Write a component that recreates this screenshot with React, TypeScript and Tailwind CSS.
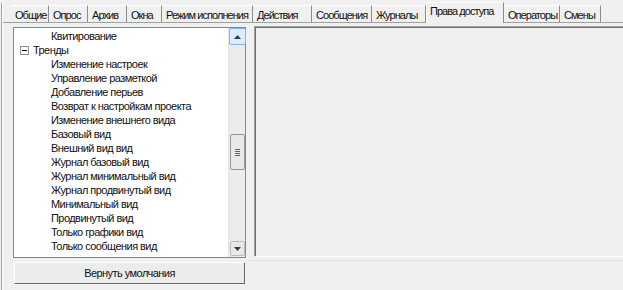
import React from "react"

const tabs = [
  { label: "Общие", w: 38 },
  { label: "Опрос", w: 39 },
  { label: "Архив", w: 39 },
  { label: "Окна", w: 35 },
  { label: "Режим исполнения", w: 91 },
  { label: "Действия", w: 59 },
  { label: "Сообщения", w: 60 },
  { label: "Журналы", w: 54 },
  { label: "Права доступа", w: 78, active: true },
  { label: "Операторы", w: 56 },
  { label: "Смены", w: 41 },
]

const items = [
  "Изменение настроек",
  "Управление разметкой",
  "Добавление перьев",
  "Возврат к настройкам проекта",
  "Изменение внешнего вида",
  "Базовый вид",
  "Внешний вид вид",
  "Журнал базовый вид",
  "Журнал минимальный вид",
  "Журнал продвинутый вид",
  "Минимальный вид",
  "Продвинутый вид",
  "Только графики вид",
  "Только сообщения вид",
]

const Arrow = ({ up }: { up?: boolean }) => (
  <svg width="7" height="4" viewBox="0 0 7 4">
    <path d={up ? "M0 4 L3.5 0 L7 4 Z" : "M0 0 L3.5 4 L7 0 Z"} fill="#3c3c3c" />
  </svg>
)

const App = () => {
  return (
    <div className="w-[623px] h-[290px] overflow-hidden bg-[#f0f0f0] text-[11px] tracking-[-0.55px] text-[#111] font-['Liberation_Sans',Arial,sans-serif]">
      <div className="ml-[1px] mt-[3px] h-full border-l border-[#a5a5a5]">
        <div className="h-full border-l border-white flex flex-col">
          {/* Tabs */}
          <div className="h-[19px] flex items-end pl-[8px] whitespace-nowrap tracking-[-0.95px]">
            {tabs.map((t) =>
              t.active ? (
                <div
                  key={t.label}
                  style={{ width: t.w }}
                  className="h-[21px] -mb-[1px] relative z-10 bg-[#f0f0f0] border-l border-t border-white border-r border-r-[#8c8c8c] pl-[3px] pt-[1px] leading-[14px]"
                >
                  {t.label}
                </div>
              ) : (
                <div
                  key={t.label}
                  style={{ width: t.w }}
                  className="h-[17px] border-t border-white border-r border-r-[#8c8c8c] pl-[4px] pt-[2px] leading-[14px]"
                >
                  {t.label}
                </div>
              )
            )}
          </div>

          {/* Tab page */}
          <div className="flex-1 border-t border-[#a0a0a0] flex">
            <div className="pl-[10px] flex flex-col">
              <div className="mt-[4px] w-[233px] h-[231px] border border-[#828790] bg-white flex">
                <div className="flex-1 pt-[1px] flex flex-col whitespace-nowrap">
                  <div className="h-[14px] leading-[14px] pl-[37px]">Квитирование</div>
                  <div className="h-[14px] flex items-center">
                    <div className="ml-[6px] w-[9px] h-[9px] border border-[#919191] bg-white flex items-center justify-center">
                      <div className="w-[5px] h-[1px] bg-black" />
                    </div>
                    <span className="ml-[4px] leading-[14px]">Тренды</span>
                  </div>
                  {items.map((it) => (
                    <div key={it} className="h-[14px] leading-[14px] pl-[37px]">
                      {it}
                    </div>
                  ))}
                </div>
                {/* Scrollbar */}
                <div className="w-[17px] bg-[#ececec] border-l border-[#e4e4e4] flex flex-col items-center">
                  <div className="w-[17px] h-[17px] rounded-[2px] border border-[#7eb4ea] bg-[#dcecfc] flex items-center justify-center">
                    <Arrow up />
                  </div>
                  <div className="mt-[89px] w-[15px] h-[36px] rounded-[2px] border border-[#979797] bg-[#e8e8e8] flex flex-col items-center justify-center gap-[1px]">
                    <div className="w-[5px] h-[1px] bg-[#646464]" />
                    <div className="w-[5px] h-[1px] bg-[#646464]" />
                    <div className="w-[5px] h-[1px] bg-[#646464]" />
                    <div className="w-[5px] h-[1px] bg-[#646464]" />
                  </div>
                  <div className="mt-auto mb-[1px] w-[15px] h-[15px] rounded-[2px] border border-[#bcbcbc] bg-[#e9e9e9] flex items-center justify-center">
                    <Arrow />
                  </div>
                </div>
              </div>
              <button className="mt-[4px] ml-[1px] w-[231px] h-[22px] bg-[#ececec] border-t border-l border-white border-r border-b border-r-[#696969] border-b-[#696969] text-[11px] leading-[20px] text-center">
                Вернуть умолчания
              </button>
            </div>
            <div className="flex-1 flex flex-col">
              <div className="ml-[8px] mt-[3px] h-[231px] border-l border-t border-[#a0a0a0] border-b border-b-white">
                <div className="h-full border-l border-t border-[#6e6e6e] bg-[#f0f0f0]" />
              </div>
              <div className="mt-[3px] h-[1px] bg-[#e3e3e3]" />
            </div>
          </div>
        </div>
      </div>
    </div>
  )
}

export default App
